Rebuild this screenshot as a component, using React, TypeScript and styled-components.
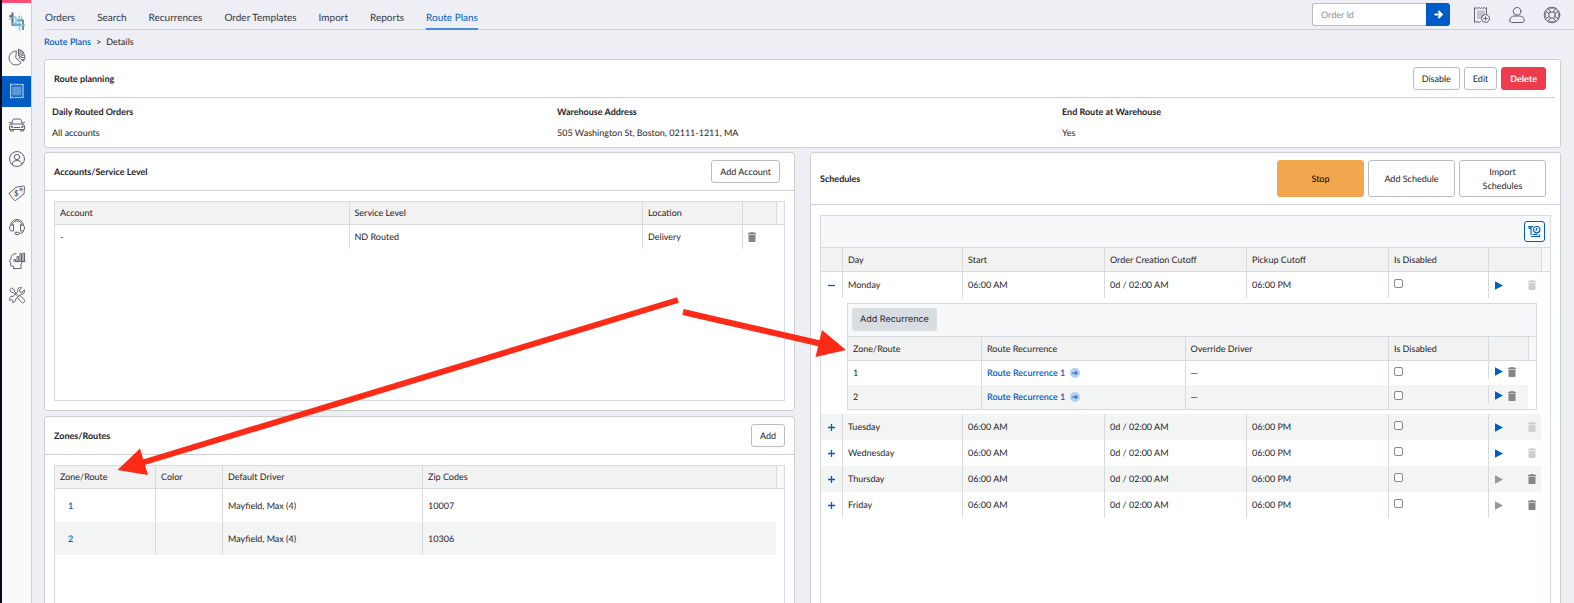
import React from 'react';
import styled, { createGlobalStyle, css } from 'styled-components';

const BLUE = '#005cc5';
const INK = '#1f2226';
const CARD_LINE = '#cdcfd1';
const GRID_LINE = '#d6dbdf';
const SANS = 'Lato, "Liberation Sans", sans-serif';

const GlobalStyle = createGlobalStyle`
  * { box-sizing: border-box; }
  body {
    margin: 0;
    background: #eeeff4;
    color: ${INK};
    font-family: ${SANS};
    font-size: 9px;
    line-height: 14px;
    text-rendering: geometricPrecision;
  }
  button, input { font: inherit; color: inherit; margin: 0; text-rendering: inherit; }
  svg { display: block; flex: none; }
`;

/* ---------- shell ---------- */

const Shell = styled.div`
  display: flex;
  height: 100vh;
  position: relative;
  overflow: hidden;
`;

const Sidebar = styled.nav`
  display: flex;
  flex-direction: column;
  flex: none;
  gap: 3px;
  width: 32px;
  background: #fafafa;
  border-left: 2px solid #060c1c;
  border-right: 1px solid ${CARD_LINE};
`;

const Brand = styled.a`
  display: flex;
  justify-content: center;
  align-items: center;
  height: 39px;
  border-top: 3px solid #ff4d73;
`;

const SideLink = styled.a<{ $active?: boolean }>`
  display: flex;
  justify-content: center;
  align-items: center;
  height: 31px;
  padding-bottom: 1px;
  color: ${(p) => (p.$active ? '#a9ccf2' : '#62646f')};
  background: ${(p) => (p.$active ? BLUE : 'transparent')};
`;

const Main = styled.main`
  flex: 1;
  min-width: 0;
  padding: 0 13px 13px 12px;
  overflow-y: auto;
  scrollbar-width: none;
`;

const TopBar = styled.header`
  display: flex;
  justify-content: space-between;
  height: 30px;
  margin: 0 -13px 0 1px;
  padding-right: 13px;
  border-bottom: 1px solid ${CARD_LINE};
`;

const Tabs = styled.nav`
  display: flex;
  gap: 22px;
  font-size: 10px;
`;

const Tab = styled.a<{ $active?: boolean }>`
  height: 30px;
  padding-top: 11px;
  color: ${(p) => (p.$active ? BLUE : '#33353d')};
  text-decoration: none;
  white-space: nowrap;
  ${(p) => p.$active && css`border-bottom: 2px solid #4a8bd9;`}
`;

const Tools = styled.div`
  display: flex;
  align-items: center;
  gap: 17px;
`;

const Search = styled.form`
  display: flex;
  height: 23px;
  margin-right: 6px;
`;

const SearchInput = styled.input`
  width: 114px;
  padding: 0 8px;
  border: 1px solid #babcc0;
  border-right: 0;
  border-radius: 3px 0 0 3px;
  background: #fff;
  &::placeholder { color: #8b8f96; }
`;

const SearchButton = styled.button`
  display: flex;
  align-items: center;
  justify-content: center;
  width: 24px;
  padding: 0;
  border: 0;
  border-radius: 0 3px 3px 0;
  background: ${BLUE};
  color: #fff;
`;

const ToolLink = styled.a`
  color: #62646f;
`;

const Crumbs = styled.nav`
  display: flex;
  gap: 5px;
  height: 29px;
  padding-top: 5px;
`;

const Link = styled.a`
  color: ${BLUE};
  font-weight: 600;
  text-decoration: none;
`;

/* ---------- cards ---------- */

const Card = styled.section`
  background: #fff;
  border: 1px solid ${CARD_LINE};
  border-radius: 3px;
`;

const CardHead = styled.div<{ $inset?: boolean; $tight?: boolean }>`
  display: flex;
  align-items: center;
  justify-content: space-between;
  padding: 7px ${(p) => (p.$inset || p.$tight ? '9px' : '14px')} 7px 9px;
  margin-right: ${(p) => (p.$inset ? '5px' : '0')};
  border-bottom: 1px solid ${CARD_LINE};
`;

const CardTitle = styled.h2`
  margin: 0;
  font-size: 9px;
  font-weight: 700;
`;

const Buttons = styled.div`
  display: flex;
  gap: 4px;
`;

const Button = styled.button<{ $tone?: 'danger' | 'warn'; $large?: boolean }>`
  height: ${(p) => (p.$large ? '37px' : '23px')};
  width: ${(p) => (p.$large ? '87px' : 'auto')};
  padding: 0 ${(p) => (p.$large ? '14px' : '8px')};
  border: 1px solid #babcbf;
  border-radius: 3px;
  background: #fff;
  ${(p) => p.$tone === 'danger' && css`border-color: #ee3b4d; background: #ee3b4d; color: #fff; font-weight: 700;`}
  ${(p) => p.$tone === 'warn' && css`border-color: #f2a64d; background: #f2a64d; color: #000;`}
`;

const Facts = styled.dl`
  display: grid;
  grid-template-columns: repeat(3, 1fr);
  margin: 0 -7px 0 0;
  padding: 7px 0 7px 7px;
`;

const Fact = styled.div`
  display: flex;
  flex-direction: column;
  gap: 7px;
  dt { font-weight: 700; }
  dd { margin: 0; }
`;

const Columns = styled.div`
  display: grid;
  grid-template-columns: 1fr 1fr;
  gap: 15px;
  margin-top: 4px;
`;

const Stack = styled.div`
  display: flex;
  flex-direction: column;
  gap: 5px;
`;

/* ---------- data grids ---------- */

const GridBox = styled.div<{ $min?: number }>`
  margin: 10px 9px 9px;
  min-height: ${(p) => p.$min ?? 0}px;
  border: 1px solid ${GRID_LINE};
`;

const NestedBox = styled.div`
  border: 1px solid ${GRID_LINE};
`;

const GridBar = styled.div<{ $end?: boolean }>`
  display: flex;
  align-items: center;
  justify-content: ${(p) => (p.$end ? 'flex-end' : 'flex-start')};
  padding: ${(p) => (p.$end ? '4px 5px' : '4px 4px 5px')};
  border-bottom: 1px solid ${GRID_LINE};
  background: #f7f8fa;
`;

const BarButton = styled.button`
  height: 23px;
  padding: 0 8px;
  border: 0;
  border-radius: 3px;
  background: #d8dde1;
  font-family: Inter, sans-serif;
`;

const IconButton = styled.button`
  display: flex;
  align-items: center;
  justify-content: center;
  width: 21px;
  height: 21px;
  margin: 1px 0;
  padding: 0;
  border: 1px solid ${BLUE};
  border-radius: 3px;
  background: #fff;
  color: ${BLUE};
`;

const Table = styled.table`
  width: 100%;
  table-layout: fixed;
  border-collapse: separate;
  border-spacing: 0;
`;

const Th = styled.th<{ $h?: number }>`
  height: ${(p) => p.$h ?? 24}px;
  padding: 0 5px;
  border-bottom: 1px solid ${GRID_LINE};
  background: #f2f2f2;
  font-weight: 400;
  text-align: left;
  white-space: nowrap;
  & + & { border-left: 1px solid ${GRID_LINE}; }
  &:last-child { background: #f7f8fa; padding: 0; }
`;

const Td = styled.td<{ $shade?: boolean; $indent?: boolean }>`
  padding: 0 5px;
  padding-left: ${(p) => (p.$indent ? '13px' : '5px')};
  background: ${(p) => (p.$shade ? '#f3f4f4' : 'transparent')};
  white-space: nowrap;
  & + & { border-left: 1px solid ${GRID_LINE}; }
`;

const BareTd = styled.td`
  padding: 0;
`;

const ShortTd = styled.td<{ $shade?: boolean }>`
  padding: 0;
  vertical-align: top;
  background: ${(p) => (p.$shade ? '#f3f4f4' : 'transparent')};
`;

const ExpandedTd = styled.td`
  padding: 5px 4px 4px 5px;
`;

const Tr = styled.tr<{ $h: number }>`
  height: ${(p) => p.$h}px;
`;

const Actions = styled.div<{ $spread?: boolean; $ruled?: boolean }>`
  display: flex;
  align-items: center;
  justify-content: ${(p) => (p.$spread ? 'space-between' : 'flex-start')};
  gap: 5px;
  padding: ${(p) => (p.$spread ? '0 0 0 1px' : '0')};
  ${(p) => p.$ruled && css`height: 18px; padding: 3px 6px 0; border-left: 1px solid ${GRID_LINE};`}
`;

const GlyphButton = styled.button<{ $color: string }>`
  display: flex;
  padding: 0;
  border: 0;
  background: none;
  color: ${(p) => p.$color};
`;

const Expander = styled(GlyphButton)`
  margin: 0 auto;
`;

const Check = styled.input`
  display: block;
  appearance: none;
  width: 9px;
  height: 9px;
  margin: 0 0 3px;
  border: 1px solid #85878a;
  border-radius: 2px;
  background: #fff;
`;

const RouteLink = styled(Link)`
  display: inline-flex;
  align-items: center;
  gap: 5px;
`;

const Annotation = styled.svg`
  position: absolute;
  top: 0;
  left: 0;
  overflow: visible;
  pointer-events: none;
`;

/* ---------- icons ---------- */

const Icon = ({ size = 18, children }: { size?: number; children: React.ReactNode }) => (
  <svg width={size} height={size} viewBox="0 0 18 18" fill="none" stroke="currentColor" strokeWidth="1" strokeLinejoin="round" strokeLinecap="round" aria-hidden="true">
    {children}
  </svg>
);

const LogoIcon = () => (
  <svg width="18" height="20" viewBox="0 0 18 20" fill="none" aria-hidden="true">
    <path d="M4.500 1.500v12.300H13M1.200 5.200h2.500" stroke="#63666f" strokeWidth="2" />
    <path d="M9 9.300h6V19" stroke="#6d7f8d" strokeWidth="1.800" />
    <path d="M1 8.500c2.500-2.500 4-2.800 7-2.300M11.200 4.500v10M8 6v9.500M3 11.500c3 2.500 9 3.500 14 2.300M11.500 14v5.500M13.500 5.500v3M5.500 12l3 3.500" stroke="#6cc3ea" strokeWidth="1.700" opacity=".8" />
  </svg>
);

const PieIcon = () => (
  <Icon>
    <path d="M8 3a7 7 0 1 0 5.200 11.700L8 10z" />
    <path d="M10.500 1.500v6.200l5.600-2.700a6.500 6.500 0 0 0-5.600-3.500z" />
    <path d="M11 9.500l4.300 3.800a6.500 6.500 0 0 0 1.400-6.300z" />
    <path d="M12 2.500v3.500M14 3.500v1.500M13.500 9.500h3M14.500 11.500h1.500" />
  </Icon>
);

const TEETH = 'M3 2l1.200 1 1.200-1 1.200 1 1.200-1L9 3l1.200-1 1.200 1 1.200-1 1.200 1L15 2v14l-1.200-1-1.200 1-1.200-1-1.200 1L9 15l-1.200 1-1.200-1-1.200 1-1.200-1L3 16z';

const ReceiptIcon = () => (
  <Icon>
    <path d={TEETH} stroke="#d5e6f9" />
    <path d="M5 5h8v8H5z" fill="#5c98dc" stroke="#5c98dc" />
  </Icon>
);

const CarIcon = () => (
  <Icon>
    <path d="M3.500 8l1.500-4.200c.2-.5.500-.8 1-.8h6c.5 0 .8.300 1 .8L14.500 8M1.500 6.500l2 .5M16.500 6.500l-2 .5M3 8h12l1.500 2v3.500h-15V10zM2.500 13.500V15h3v-1.500M12.500 13.500V15h3v-1.500M6 11.500h6" />
    <circle cx="3.800" cy="10.800" r=".8" />
    <circle cx="14.200" cy="10.800" r=".8" />
  </Icon>
);

const AccountIcon = () => (
  <Icon>
    <circle cx="9" cy="9" r="7.500" />
    <circle cx="9" cy="7" r="2.700" />
    <path d="M4 14.300c.3-2.500 2.300-3.800 5-3.800s4.700 1.300 5 3.800" />
  </Icon>
);

const TagIcon = () => (
  <Icon>
    <path d="M1.500 9L8 3.300l7.500-1.300c.6 0 1 .4 1 1l-.5 7L7.500 16.500c-.4.300-.8.200-1.100-.2L1.300 10c-.2-.4-.1-.7.2-1z" />
    <circle cx="13" cy="5.300" r="1.200" />
    <text x="6" y="12" fontSize="8" fontWeight="700" fontFamily="Lato, sans-serif" fill="currentColor" stroke="none">$</text>
  </Icon>
);

const HeadsetIcon = () => (
  <Icon>
    <path d="M2.500 7C3 3.500 5.500 1.500 9 1.500S15 3.500 15.500 7M4 7c.5-2.500 2.300-4 5-4s4.500 1.500 5 4M5.500 7v6H4c-1.500 0-2.500-1.200-2.500-3S2.500 7 4 7zM12.500 7v6H14c1.500 0 2.500-1.200 2.500-3S15.500 7 14 7zM15.500 13c-.5 2-2 2.500-4 2.500" />
    <rect x="7" y="14.300" width="4.500" height="2.200" rx="1" />
  </Icon>
);

const InsightIcon = () => (
  <Icon>
    <path d="M8 1.500C4.500 1.700 3 4 3 6.500L1.300 9.500l1.400.8v3c0 .6.300.9 1 .9h2V17M14.500 10c-1.200 1.500-1.700 2.500-1.500 4v2.500H6M8 9.500h9" />
    <path d="M6 9.500V7.500h1.500v2M9 9.500v-5h1.700v5M12 9.500v-8h1.500v8M15 9.500V1h1.500v8.500" />
  </Icon>
);

const ToolsIcon = () => (
  <Icon>
    <path d="M2 3.500L3.500 2l3 2v1.500l3 3-1 1-3-3H4z" />
    <path d="M10.500 10l1.500-.5 4.300 4.200c.8.800.4 2-.3 2.600-.7.600-1.600.7-2.400 0L9.700 12z" />
    <path d="M16.300 4.300L14 6.500l-2-.5-.5-2L13.700 1.700C12 1 10 1.800 9.600 3.500c-.2.800 0 1.500.2 2.200L5 10.400c-1.500-.4-3.200.5-3.500 2.100-.2.800 0 1.600.2 2l1.800-1 1.500 1-.3 2C6.500 16.500 8 15 7.700 13l4.800-4.700c2 .5 4.800-1 3.800-4z" />
  </Icon>
);

const AddReceiptIcon = () => (
  <Icon>
    <path d="M7.500 15.500l-1.200 1-1.200-1-1.200 1-1.200-1-1.200 1V1.500l1.200 1 1.200-1 1.200 1 1.200-1 1.200 1 1.200-1 1.200 1 1.200-1 1.200 1 1.200-1V8" />
    <path d="M4 4.500h8v3.300L8 13H4z" fill="#c2c4c9" stroke="none" />
    <circle cx="12.500" cy="12.500" r="4" />
    <path d="M12.500 10.800v3.400M10.800 12.500h3.400" />
  </Icon>
);

const UserIcon = () => (
  <Icon>
    <circle cx="9" cy="5.300" r="3.800" />
    <path d="M1.700 14.500c0-2.800 1.800-4.200 4.500-4.500h5.600c2.700.3 4.500 1.700 4.500 4.500 0 1.300-.8 2-2 2H3.700c-1.200 0-2-.7-2-2z" />
  </Icon>
);

const HelpIcon = () => (
  <Icon>
    <circle cx="9" cy="9" r="7.800" />
    <circle cx="9" cy="9" r="3.300" />
    <path d="M3 6.200a6.500 6.500 0 0 0 0 5.600M15 6.200a6.500 6.500 0 0 1 0 5.600M6.200 3a6.500 6.500 0 0 1 5.600 0M6.200 15a6.500 6.500 0 0 0 5.600 0" strokeWidth=".7" />
    <path d="M2.600 5l3.500 2.500M5 2.600l2.500 3.500M13 2.600l-2.500 3.500M15.400 5l-3.500 2.500M2.600 13l3.500-2.500M5 15.400l2.500-3.500M15.400 13l-3.500-2.500M13 15.400l-2.500-3.500" />
  </Icon>
);

const ArrowIcon = () => (
  <svg width="9" height="9" viewBox="0 0 9 9" fill="none" stroke="currentColor" strokeWidth="2" aria-hidden="true">
    <path d="M.5 4.500h7M4.300 1l3.500 3.500L4.300 8" />
  </svg>
);

const HistoryIcon = () => (
  <svg width="13" height="13" viewBox="0 0 13 13" fill="none" stroke="currentColor" strokeWidth="1.200" aria-hidden="true">
    <path d="M1 3.500V1.700h4M3 2v8M3 11.500h8.500V9.500M4.500 9.500h5M1 3.500h2" />
    <circle cx="8.700" cy="4.700" r="3.200" />
    <path d="M8.700 3v2h-1.500" />
  </svg>
);

const PlayIcon = () => (
  <svg width="8" height="9" viewBox="0 0 8 9" fill="currentColor" aria-hidden="true">
    <path d="M0 .3v8.400l8-4.200z" />
  </svg>
);

const TrashIcon = () => (
  <svg width="8" height="10" viewBox="0 0 8 10" fill="currentColor" aria-hidden="true">
    <path d="M0 .8h2.300L2.800 0h2.400l.5.800H8v1.100H0zM.5 2.600h7v6.300c0 .6-.4 1.100-1 1.100h-5c-.6 0-1-.5-1-1.100z" />
  </svg>
);

const SignIcon = ({ open }: { open: boolean }) => (
  <svg width="7" height="7" viewBox="0 0 7 7" stroke="currentColor" strokeWidth="1.300" aria-hidden="true">
    <path d={open ? 'M0 3.500h7' : 'M0 3.500h7M3.500 0v7'} />
  </svg>
);

const GoIcon = () => (
  <svg width="10" height="10" viewBox="0 0 10 10" fill="none" stroke="currentColor" aria-hidden="true">
    <circle cx="5" cy="5" r="5" fill="#b3cef0" stroke="none" />
    <path d="M2.300 5h5M5.300 3l2 2-2 2" />
  </svg>
);

/* ---------- data ---------- */

const sideItems = [
  { name: 'Dashboard', icon: <PieIcon /> },
  { name: 'Orders', icon: <ReceiptIcon />, active: true },
  { name: 'Drivers', icon: <CarIcon /> },
  { name: 'Customers', icon: <AccountIcon /> },
  { name: 'Pricing', icon: <TagIcon /> },
  { name: 'Support', icon: <HeadsetIcon /> },
  { name: 'Insights', icon: <InsightIcon /> },
  { name: 'Settings', icon: <ToolsIcon /> },
];

const tabs = ['Orders', 'Search', 'Recurrences', 'Order Templates', 'Import', 'Reports', 'Route Plans'];

const facts = [
  ['Daily Routed Orders', 'All accounts'],
  ['Warehouse Address', '505 Washington St, Boston, 02111-1211, MA'],
  ['End Route at Warehouse', 'Yes'],
];

const zones = [
  { id: '1', driver: 'Mayfield, Max (4)', zip: '10007' },
  { id: '2', driver: 'Mayfield, Max (4)', zip: '10306' },
];

const schedules = [
  { day: 'Monday', enabled: true, open: true },
  { day: 'Tuesday', enabled: true, shade: true },
  { day: 'Wednesday', enabled: true },
  { day: 'Thursday', shade: true },
  { day: 'Friday' },
];

/* ---------- sections ---------- */

const Cols = ({ widths }: { widths: (number | null)[] }) => (
  <colgroup>
    {widths.map((w, i) => (
      <col key={i} width={w ?? undefined} />
    ))}
  </colgroup>
);

const AccountsCard = () => (
  <Card>
    <CardHead>
      <CardTitle>Accounts/Service Level</CardTitle>
      <Button>Add Account</Button>
    </CardHead>
    <GridBox $min={200}>
      <Table>
        <Cols widths={[null, null, 100, 34, 8]} />
        <thead>
          <tr>
            <Th $h={23}>Account</Th>
            <Th $h={23}>Service Level</Th>
            <Th $h={23}>Location</Th>
            <Th $h={23} />
            <Th $h={23} />
          </tr>
        </thead>
        <tbody>
          <Tr $h={24}>
            <Td>-</Td>
            <Td>ND Routed</Td>
            <Td>Delivery</Td>
            <Td>
              <GlyphButton $color="#858585" aria-label="Delete account"><TrashIcon /></GlyphButton>
            </Td>
            <BareTd />
          </Tr>
        </tbody>
      </Table>
    </GridBox>
  </Card>
);

const ZonesCard = () => (
  <Card>
    <CardHead $tight>
      <CardTitle>Zones/Routes</CardTitle>
      <Button>Add</Button>
    </CardHead>
    <GridBox $min={200}>
      <Table>
        <Cols widths={[100, 67, 200, null, 8]} />
        <thead>
          <tr>
            <Th $h={23}>Zone/Route</Th>
            <Th $h={23}>Color</Th>
            <Th $h={23}>Default Driver</Th>
            <Th $h={23}>Zip Codes</Th>
            <Th $h={23} />
          </tr>
        </thead>
        <tbody>
          {zones.map((z, i) => (
            <Tr key={z.id} $h={33}>
              <Td $shade={i === 1} $indent><Link href="#">{z.id}</Link></Td>
              <Td $shade={i === 1} />
              <Td $shade={i === 1}>{z.driver}</Td>
              <Td $shade={i === 1}>{z.zip}</Td>
              <BareTd />
            </Tr>
          ))}
        </tbody>
      </Table>
    </GridBox>
  </Card>
);

const RecurrenceGrid = () => (
  <NestedBox>
    <GridBar>
      <BarButton>Add Recurrence</BarButton>
    </GridBar>
    <Table>
      <Cols widths={[133, null, null, 100, 40, 8]} />
      <thead>
        <tr>
          <Th>Zone/Route</Th>
          <Th>Route Recurrence</Th>
          <Th>Override Driver</Th>
          <Th>Is Disabled</Th>
          <Th />
          <Th />
        </tr>
      </thead>
      <tbody>
        {['1', '2'].map((zone, i) => (
          <Tr key={zone} $h={24}>
            <Td $shade={i === 1}>{zone}</Td>
            <Td $shade={i === 1}>
              <RouteLink href="#">Route Recurrence 1 <GoIcon /></RouteLink>
            </Td>
            <Td $shade={i === 1}>—</Td>
            <Td $shade={i === 1}><Check type="checkbox" aria-label={`Zone ${zone} is disabled`} /></Td>
            <ShortTd $shade={i === 1}>
              <Actions $ruled>
                <GlyphButton $color={BLUE} aria-label="Run"><PlayIcon /></GlyphButton>
                <GlyphButton $color="#858585" aria-label="Delete"><TrashIcon /></GlyphButton>
              </Actions>
            </ShortTd>
            <BareTd />
          </Tr>
        ))}
      </tbody>
    </Table>
  </NestedBox>
);

const SchedulesCard = () => (
  <Card>
    <CardHead>
      <CardTitle>Schedules</CardTitle>
      <Buttons>
        <Button $large $tone="warn">Stop</Button>
        <Button $large>Add Schedule</Button>
        <Button $large>Import Schedules</Button>
      </Buttons>
    </CardHead>
    <GridBox $min={400}>
      <GridBar $end>
        <IconButton aria-label="Schedule history"><HistoryIcon /></IconButton>
      </GridBar>
      <Table>
        <Cols widths={[21, 120, null, null, null, 100, 53, 9]} />
        <thead>
          <tr>
            <Th />
            <Th>Day</Th>
            <Th>Start</Th>
            <Th>Order Creation Cutoff</Th>
            <Th>Pickup Cutoff</Th>
            <Th>Is Disabled</Th>
            <Th />
            <Th />
          </tr>
        </thead>
        <tbody>
          {schedules.map((s) => (
            <React.Fragment key={s.day}>
              <Tr $h={26}>
                <Td $shade={s.shade}>
                  <Expander $color={BLUE} aria-label={`Toggle ${s.day}`}><SignIcon open={!!s.open} /></Expander>
                </Td>
                <Td $shade={s.shade}>{s.day}</Td>
                <Td $shade={s.shade}>06:00 AM</Td>
                <Td $shade={s.shade}>0d / 02:00 AM</Td>
                <Td $shade={s.shade}>06:00 PM</Td>
                <Td $shade={s.shade}><Check type="checkbox" aria-label={`${s.day} is disabled`} /></Td>
                <Td $shade={s.shade}>
                  <Actions $spread>
                    <GlyphButton $color={s.enabled ? BLUE : '#92979c'} aria-label="Run"><PlayIcon /></GlyphButton>
                    <GlyphButton $color={s.enabled ? '#cfcfcf' : '#858585'} aria-label="Delete"><TrashIcon /></GlyphButton>
                  </Actions>
                </Td>
                <BareTd />
              </Tr>
              {s.open && (
                <tr>
                  <BareTd />
                  <ExpandedTd colSpan={6}><RecurrenceGrid /></ExpandedTd>
                  <BareTd />
                </tr>
              )}
            </React.Fragment>
          ))}
        </tbody>
      </Table>
    </GridBox>
  </Card>
);

export default function App() {
  return (
    <Shell>
      <GlobalStyle />
      <Sidebar>
        <Brand href="#" aria-label="Home"><LogoIcon /></Brand>
        {sideItems.map((item) => (
          <SideLink key={item.name} href="#" aria-label={item.name} $active={item.active}>{item.icon}</SideLink>
        ))}
      </Sidebar>
      <Main>
        <TopBar>
          <Tabs>
            {tabs.map((tab) => (
              <Tab key={tab} href="#" $active={tab === 'Route Plans'}>{tab}</Tab>
            ))}
          </Tabs>
          <Tools>
            <Search>
              <SearchInput placeholder="Order Id" aria-label="Order Id" />
              <SearchButton type="button" aria-label="Find order"><ArrowIcon /></SearchButton>
            </Search>
            <ToolLink href="#" aria-label="New order"><AddReceiptIcon /></ToolLink>
            <ToolLink href="#" aria-label="Profile"><UserIcon /></ToolLink>
            <ToolLink href="#" aria-label="Help"><HelpIcon /></ToolLink>
          </Tools>
        </TopBar>
        <Crumbs>
          <Link href="#">Route Plans</Link>
          <span>&gt;</span>
          <span>Details</span>
        </Crumbs>
        <Card>
          <CardHead $inset>
            <CardTitle>Route planning</CardTitle>
            <Buttons>
              <Button>Disable</Button>
              <Button>Edit</Button>
              <Button $tone="danger">Delete</Button>
            </Buttons>
          </CardHead>
          <Facts>
            {facts.map(([term, value]) => (
              <Fact key={term}>
                <dt>{term}</dt>
                <dd>{value}</dd>
              </Fact>
            ))}
          </Facts>
        </Card>
        <Columns>
          <Stack>
            <AccountsCard />
            <ZonesCard />
          </Stack>
          <SchedulesCard />
        </Columns>
      </Main>
      <Annotation width="1" height="1" fill="#ff2a17" stroke="#ff2a17" aria-hidden="true">
        <path d="M678 300L143 462.500M683 312l137 31.500" strokeWidth="6" />
        <path d="M117.500 470L140 448.500l8 26.500zM846 350l-24-20-6.500 27z" stroke="none" />
      </Annotation>
    </Shell>
  );
}
